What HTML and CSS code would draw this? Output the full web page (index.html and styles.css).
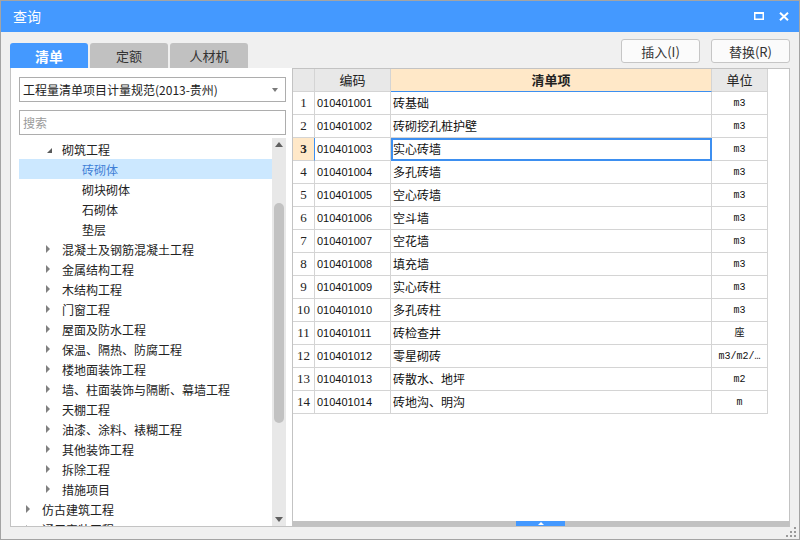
FILE: index.html
```html
<!DOCTYPE html>
<html lang="zh">
<head>
<meta charset="utf-8">
<title>查询</title>
<link rel="stylesheet" href="styles.css">
</head>
<body>
<div class="window">
  <div class="titlebar">
    <span class="title">查询</span>
    <div class="winctl">
      <svg class="ico-max" width="10" height="8" viewBox="0 0 10 8"><rect x="0.75" y="1" width="8.5" height="6.25" fill="none" stroke="#fff" stroke-width="1.5"/><rect x="0" y="0" width="10" height="2" fill="#fff"/></svg>
      <svg class="ico-close" width="10" height="9" viewBox="0 0 10 9"><path d="M1 0.8 L9 8.2 M9 0.8 L1 8.2" stroke="#fff" stroke-width="2" fill="none"/></svg>
    </div>
  </div>
  <div class="toolbar">
    <div class="tabs">
      <div class="tab active">清单</div>
      <div class="tab">定额</div>
      <div class="tab">人材机</div>
    </div>
    <div class="actions">
      <button class="btn">插入(I)</button>
      <button class="btn">替换(R)</button>
    </div>
  </div>
  <div class="frame">
    <div class="left">
      <div class="select"><span>工程量清单项目计量规范(2013-贵州)</span><i class="caret"></i></div>
      <div class="search">搜索</div>
      <div class="treebox">
        <div class="tree">
          <div class="node lvl1"><span class="tog"><i class="tri-open"></i></span><span>砌筑工程</span></div>
          <div class="node lvl2 sel"><span class="tog"></span><span>砖砌体</span></div>
          <div class="node lvl2"><span class="tog"></span><span>砌块砌体</span></div>
          <div class="node lvl2"><span class="tog"></span><span>石砌体</span></div>
          <div class="node lvl2"><span class="tog"></span><span>垫层</span></div>
          <div class="node lvl1"><span class="tog"><i class="tri"></i></span><span>混凝土及钢筋混凝土工程</span></div>
          <div class="node lvl1"><span class="tog"><i class="tri"></i></span><span>金属结构工程</span></div>
          <div class="node lvl1"><span class="tog"><i class="tri"></i></span><span>木结构工程</span></div>
          <div class="node lvl1"><span class="tog"><i class="tri"></i></span><span>门窗工程</span></div>
          <div class="node lvl1"><span class="tog"><i class="tri"></i></span><span>屋面及防水工程</span></div>
          <div class="node lvl1"><span class="tog"><i class="tri"></i></span><span>保温、隔热、防腐工程</span></div>
          <div class="node lvl1"><span class="tog"><i class="tri"></i></span><span>楼地面装饰工程</span></div>
          <div class="node lvl1"><span class="tog"><i class="tri"></i></span><span>墙、柱面装饰与隔断、幕墙工程</span></div>
          <div class="node lvl1"><span class="tog"><i class="tri"></i></span><span>天棚工程</span></div>
          <div class="node lvl1"><span class="tog"><i class="tri"></i></span><span>油漆、涂料、裱糊工程</span></div>
          <div class="node lvl1"><span class="tog"><i class="tri"></i></span><span>其他装饰工程</span></div>
          <div class="node lvl1"><span class="tog"><i class="tri"></i></span><span>拆除工程</span></div>
          <div class="node lvl1"><span class="tog"><i class="tri"></i></span><span>措施项目</span></div>
          <div class="node lvl0"><span class="tog"><i class="tri"></i></span><span>仿古建筑工程</span></div>
          <div class="node lvl0"><span class="tog"><i class="tri"></i></span><span>通用安装工程</span></div>
        </div>
        <div class="vscroll">
          <span class="arrow-up"></span>
          <span class="thumb"></span>
          <span class="track"></span>
          <span class="arrow-down"></span>
        </div>
      </div>
    </div>
    <div class="right">
      <div class="grid">
        <div class="row head">
          <div class="cell rn"></div>
          <div class="cell hc">编码</div>
          <div class="cell hc hsel">清单项</div>
          <div class="cell hc">单位</div>
        </div>
        <div class="row"><div class="cell rn">1</div><div class="cell code">010401001</div><div class="cell name">砖基础</div><div class="cell unit">m3</div></div>
        <div class="row"><div class="cell rn">2</div><div class="cell code">010401002</div><div class="cell name">砖砌挖孔桩护壁</div><div class="cell unit">m3</div></div>
        <div class="row cur"><div class="cell rn">3</div><div class="cell code">010401003</div><div class="cell name focus">实心砖墙</div><div class="cell unit">m3</div></div>
        <div class="row"><div class="cell rn">4</div><div class="cell code">010401004</div><div class="cell name">多孔砖墙</div><div class="cell unit">m3</div></div>
        <div class="row"><div class="cell rn">5</div><div class="cell code">010401005</div><div class="cell name">空心砖墙</div><div class="cell unit">m3</div></div>
        <div class="row"><div class="cell rn">6</div><div class="cell code">010401006</div><div class="cell name">空斗墙</div><div class="cell unit">m3</div></div>
        <div class="row"><div class="cell rn">7</div><div class="cell code">010401007</div><div class="cell name">空花墙</div><div class="cell unit">m3</div></div>
        <div class="row"><div class="cell rn">8</div><div class="cell code">010401008</div><div class="cell name">填充墙</div><div class="cell unit">m3</div></div>
        <div class="row"><div class="cell rn">9</div><div class="cell code">010401009</div><div class="cell name">实心砖柱</div><div class="cell unit">m3</div></div>
        <div class="row"><div class="cell rn">10</div><div class="cell code">010401010</div><div class="cell name">多孔砖柱</div><div class="cell unit">m3</div></div>
        <div class="row"><div class="cell rn">11</div><div class="cell code">010401011</div><div class="cell name">砖检查井</div><div class="cell unit">座</div></div>
        <div class="row"><div class="cell rn">12</div><div class="cell code">010401012</div><div class="cell name">零星砌砖</div><div class="cell unit">m3/m2/…</div></div>
        <div class="row"><div class="cell rn">13</div><div class="cell code">010401013</div><div class="cell name">砖散水、地坪</div><div class="cell unit">m2</div></div>
        <div class="row"><div class="cell rn">14</div><div class="cell code">010401014</div><div class="cell name">砖地沟、明沟</div><div class="cell unit">m</div></div>
      </div>
      <div class="fill"></div>
      <div class="hscroll"><span class="hthumb"><i class="hup"></i></span></div>
    </div>
  </div>
  <div class="footer">
    <svg class="grip" width="12" height="10" viewBox="0 0 12 10">
      <rect x="9" y="0" width="2" height="2" fill="#9a9a9a"/>
      <rect x="5" y="4" width="2" height="2" fill="#9a9a9a"/>
      <rect x="9" y="4" width="2" height="2" fill="#9a9a9a"/>
      <rect x="1" y="8" width="2" height="2" fill="#9a9a9a"/>
      <rect x="5" y="8" width="2" height="2" fill="#9a9a9a"/>
      <rect x="9" y="8" width="2" height="2" fill="#9a9a9a"/>
    </svg>
  </div>
</div>
</body>
</html>
```

FILE: styles.css
```css
html, body {
  margin: 0;
  padding: 0;
}
body {
  font-family: "Noto Sans CJK SC", "Noto Sans", sans-serif;
  color: #222;
}
.window {
  width: 800px;
  height: 540px;
  box-sizing: border-box;
  border: 1px solid #a4a4a4;
  background: #f0f0f0;
  display: flex;
  flex-direction: column;
  overflow: hidden;
}
.titlebar {
  height: 31px;
  flex: none;
  background: #4499ff;
  display: flex;
  align-items: center;
  justify-content: space-between;
  padding: 0 10px 0 12px;
  color: #fff;
  font-size: 14px;
}
.title {
  line-height: 31px;
}
.winctl {
  display: flex;
  align-items: center;
  gap: 15px;
  padding-bottom: 1px;
}
.winctl svg {
  display: block;
}
.toolbar {
  height: 36px;
  flex: none;
  display: flex;
  justify-content: space-between;
  padding: 0 9px;
}
.tabs {
  display: flex;
  align-items: flex-end;
  gap: 2px;
}
.tab {
  width: 78px;
  height: 25px;
  border-radius: 3px 3px 0 0;
  background: #c1c1c1;
  color: #333;
  font-size: 13px;
  display: flex;
  align-items: center;
  justify-content: center;
}
.tab.active {
  background: #4499ff;
  color: #fff;
  font-weight: bold;
  font-size: 14px;
}
.actions {
  display: flex;
  gap: 11px;
  padding-top: 7px;
}
.btn {
  width: 79px;
  height: 24px;
  padding: 0;
  border: 1px solid #c6c6c6;
  border-radius: 3px;
  background: #fbfbfb;
  font-family: "Noto Sans CJK SC", sans-serif;
  font-size: 13px;
  color: #333;
}
.frame {
  height: 459px;
  flex: none;
  display: flex;
  margin: 0 9px;
}
.left {
  width: 282px;
  flex: none;
  box-sizing: border-box;
  border-left: 1px solid #c3c3c3;
  border-bottom: 1px solid #c3c3c3;
  background: #fff;
  padding: 9px 6px 0 8px;
  display: flex;
  flex-direction: column;
}
.select, .search {
  height: 25px;
  box-sizing: border-box;
  border: 1px solid #adadad;
  display: flex;
  align-items: center;
  padding: 0 7px 0 3px;
  font-size: 12px;
}
.select {
  justify-content: space-between;
  color: #222;
}
.caret {
  width: 0;
  height: 0;
  border-top: 4px solid #7a7a7a;
  border-left: 3px solid transparent;
  border-right: 3px solid transparent;
}
.search {
  margin-top: 8px;
  color: #9a9a9a;
}
.treebox {
  margin-top: 3px;
  height: 388px;
  display: flex;
}
.tree {
  flex: 1;
  overflow: hidden;
  padding-top: 1px;
}
.node {
  height: 20px;
  display: flex;
  align-items: center;
  font-size: 12px;
  color: #222;
  white-space: nowrap;
}
.node.lvl0 { padding-left: 7px; }
.node.lvl1 { padding-left: 27px; }
.node.lvl2 { padding-left: 47px; }
.node.sel {
  background: #cce8ff;
  color: #3f7fd6;
}
.tog {
  width: 16px;
  flex: none;
  display: flex;
  align-items: center;
}
.tri {
  width: 0;
  height: 0;
  border-left: 4px solid #808080;
  border-top: 4px solid transparent;
  border-bottom: 4px solid transparent;
}
.tri-open {
  width: 0;
  height: 0;
  margin-left: 1px;
  margin-top: 2px;
  border-bottom: 5px solid #5a5a5a;
  border-left: 5px solid transparent;
}
.vscroll {
  width: 14px;
  flex: none;
  background: #e8e8e8;
  display: flex;
  flex-direction: column;
  align-items: center;
}
.arrow-up {
  margin-top: 4px;
  width: 0;
  height: 0;
  border-bottom: 5px solid #606060;
  border-left: 4px solid transparent;
  border-right: 4px solid transparent;
}
.thumb {
  margin-top: 56px;
  width: 10px;
  height: 220px;
  border-radius: 5px;
  background: #c2c2c2;
}
.track {
  flex: 1;
}
.arrow-down {
  margin-bottom: 4px;
  width: 0;
  height: 0;
  border-top: 5px solid #606060;
  border-left: 4px solid transparent;
  border-right: 4px solid transparent;
}
.right {
  flex: 1;
  box-sizing: border-box;
  border: 1px solid #c3c3c3;
  background: #fff;
  display: flex;
  flex-direction: column;
}
.grid {
  flex: none;
}
.row {
  display: grid;
  grid-template-columns: 22px 76px 321px 56px;
  height: 23px;
}
.cell {
  box-sizing: border-box;
  border-right: 1px solid #d4d4d4;
  border-bottom: 1px solid #d4d4d4;
  line-height: 22px;
  white-space: nowrap;
  overflow: hidden;
}
.head .cell {
  background: #e8e8e8;
}
.hc {
  text-align: center;
  font-size: 13px;
  color: #222;
}
.head .hsel {
  background: #ffe8c8;
  font-weight: bold;
  border-bottom-color: #3d8ff0;
}
.rn {
  text-align: center;
  font-family: "Liberation Serif", serif;
  font-size: 13px;
  color: #222;
}
.cur .rn {
  background: #ffe8c8;
  font-weight: bold;
  border-right-color: #3d8ff0;
}
.code {
  padding-left: 2px;
  font-family: "Liberation Sans", sans-serif;
  font-size: 11px;
  color: #111;
}
.name {
  padding-left: 2px;
  font-size: 12px;
  color: #111;
}
.name.focus {
  outline: 2px solid #3d8ff0;
  outline-offset: -2px;
}
.unit {
  text-align: center;
  padding-top: 2px;
  line-height: 20px;
  font-family: "Liberation Mono", "Noto Sans CJK SC", monospace;
  font-size: 10px;
  color: #111;
}
.fill {
  flex: 1;
}
.hscroll {
  height: 5px;
  flex: none;
  background: #c2c2c2;
  display: flex;
  padding-left: 223px;
}
.hthumb {
  width: 49px;
  background: #4499ff;
  display: flex;
  align-items: center;
  justify-content: center;
}
.hup {
  width: 0;
  height: 0;
  border-bottom: 3px solid #fff;
  border-left: 3px solid transparent;
  border-right: 3px solid transparent;
}
.footer {
  flex: 1;
  display: flex;
  justify-content: flex-end;
  align-items: flex-end;
  padding: 0 2px 2px 0;
}
.grip {
  display: block;
}
```
